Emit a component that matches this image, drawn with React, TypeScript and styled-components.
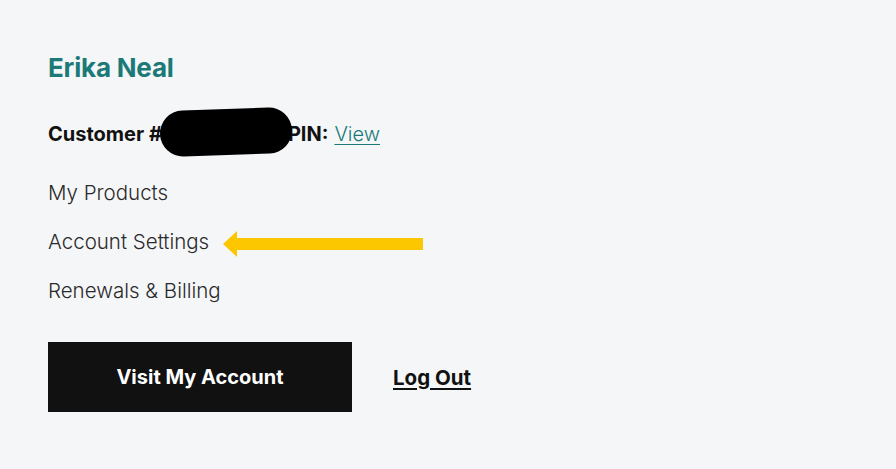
import React from "react";
import styled, { createGlobalStyle } from "styled-components";

const GlobalStyle = createGlobalStyle`
  html, body {
    margin: 0;
    padding: 0;
    background: #f5f6f8;
  }
  body {
    font-family: Inter, "Noto Sans", "Liberation Sans", sans-serif;
    color: #111;
  }
`;

const Panel = styled.div`
  width: 896px;
  height: 469px;
  box-sizing: border-box;
  padding: 51px 48px 0 48px;
  background: #f5f6f8;
  display: flex;
  flex-direction: column;
`;

const Name = styled.h2`
  margin: 0;
  font-size: 26px;
  line-height: 34px;
  font-weight: 700;
  color: #1b7a78;
  letter-spacing: -0.2px;
`;

const CustomerRow = styled.div`
  position: relative;
  margin-top: 36px;
  display: flex;
  align-items: baseline;
  font-size: 20px;
  line-height: 26px;
  font-weight: 700;
  color: #111;
`;

const Redacted = styled.span`
  position: absolute;
  left: 112px;
  top: -12px;
  width: 132px;
  height: 46px;
  background: #000;
  border-radius: 24px;
  transform: rotate(-2deg);
`;

const Gap = styled.span`
  display: inline-block;
  width: 126px;
`;

const ViewLink = styled.a`
  margin-left: 6px;
  font-weight: 300;
  color: #1b7a78;
  text-decoration: underline;
  text-decoration-thickness: 1px;
  text-underline-offset: 3px;
`;

const Menu = styled.ul`
  list-style: none;
  margin: 33px 0 0 0;
  padding: 0;
  display: flex;
  flex-direction: column;
  gap: 24px;
`;

const MenuItem = styled.li`
  display: flex;
  align-items: center;
  font-size: 20.5px;
  line-height: 25px;
  font-weight: 300;
  color: #2a2a2a;
`;

const Arrow = styled.svg`
  margin-left: 14px;
  flex-shrink: 0;
  overflow: visible;
`;

const Actions = styled.div`
  margin-top: 39px;
  display: flex;
  align-items: center;
  gap: 41px;
`;

const PrimaryButton = styled.button`
  width: 304px;
  height: 70px;
  border: none;
  border-radius: 0;
  background: #111;
  color: #fff;
  font-family: inherit;
  font-size: 20px;
  font-weight: 700;
  cursor: pointer;
`;

const LogOut = styled.a`
  font-size: 20.5px;
  font-weight: 700;
  color: #111;
  text-decoration: underline;
  text-underline-offset: 3px;
`;

const App: React.FC = () => {
  return (
    <>
      <GlobalStyle />
      <Panel>
        <Name>Erika Neal</Name>
        <CustomerRow>
          Customer #<Gap />PIN:<ViewLink href="#">View</ViewLink>
          <Redacted />
        </CustomerRow>
        <Menu>
          <MenuItem>My Products</MenuItem>
          <MenuItem>
            Account Settings
            <Arrow width="200" height="25" viewBox="0 -1 200 25">
              <polygon points="0,14 14,1 14,8 200,8 200,20 14,20 14,27" fill="#fdc700" />
            </Arrow>
          </MenuItem>
          <MenuItem>Renewals &amp; Billing</MenuItem>
        </Menu>
        <Actions>
          <PrimaryButton>Visit My Account</PrimaryButton>
          <LogOut href="#">Log Out</LogOut>
        </Actions>
      </Panel>
    </>
  );
};

export default App;
